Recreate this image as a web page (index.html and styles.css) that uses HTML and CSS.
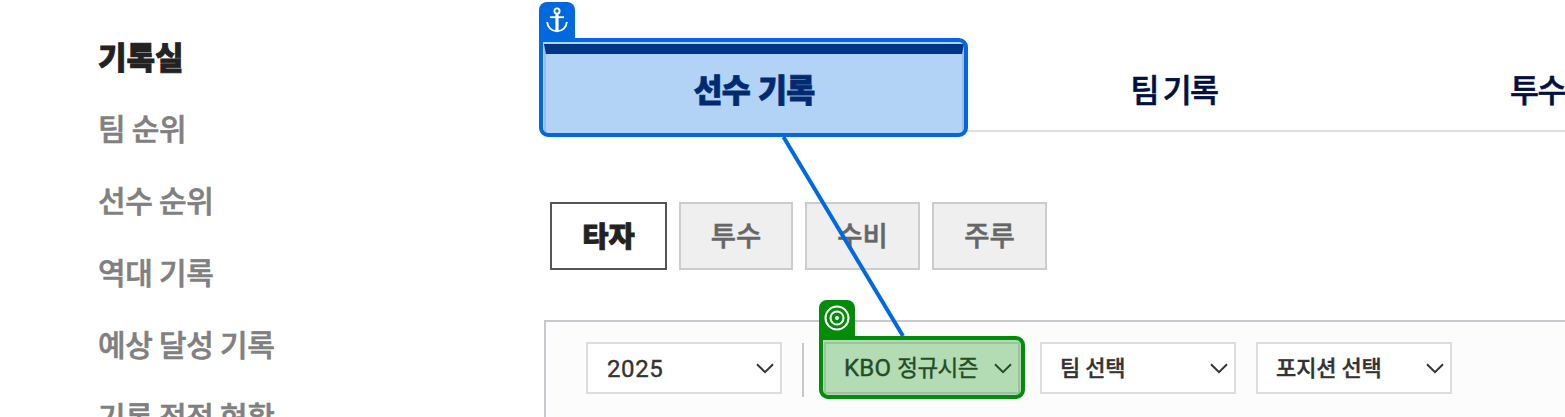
FILE: index.html
```html
<!DOCTYPE html>
<html lang="ko">
<head>
<meta charset="utf-8">
<title>기록실</title>
<link rel="stylesheet" href="styles.css">
</head>
<body>
<div class="page">
  <nav class="side">
    <h1 class="side-title">기록실</h1>
    <a class="side-link">팀 순위</a>
    <a class="side-link">선수 순위</a>
    <a class="side-link">역대 기록</a>
    <a class="side-link">예상 달성 기록</a>
    <a class="side-link">기록 정정 현황</a>
  </nav>
  <main class="main">
    <div class="tabs">
      <a class="tab tab-active"><span>선수 기록</span></a>
      <a class="tab"><span>팀 기록</span></a>
      <a class="tab tab-cut"><span>투수</span></a>
    </div>
    <div class="chips">
      <a class="chip chip-active">타자</a>
      <a class="chip chip-pitcher">투수</a>
      <a class="chip">수비</a>
      <a class="chip">주루</a>
    </div>
    <div class="filters">
      <div class="select year"><span>2025</span><svg class="arrow" viewBox="0 0 18 11"><path d="M1 1.2 9 9.2 17 1.2"/></svg></div>
      <div class="divider"></div>
      <div class="select season"><span><b class="league">KBO</b> 정규시즌</span><svg class="arrow" viewBox="0 0 18 11"><path d="M1 1.2 9 9.2 17 1.2"/></svg></div>
      <div class="select"><span>팀 선택</span><svg class="arrow" viewBox="0 0 18 11"><path d="M1 1.2 9 9.2 17 1.2"/></svg></div>
      <div class="select"><span>포지션 선택</span><svg class="arrow" viewBox="0 0 18 11"><path d="M1 1.2 9 9.2 17 1.2"/></svg></div>
    </div>
  </main>
  <div class="mark mark-anchor"></div>
  <div class="badge badge-anchor">
    <svg width="24" height="26" viewBox="0 0 24 26" fill="none" stroke="#fff" stroke-width="1.9"><circle cx="12" cy="4" r="2.6"/><path d="M5 10.2H19"/><path d="M12 6.500V24" stroke-width="3.2"/><path d="M2.200 15C2.500 20.500 6.500 24.200 12 24.200S21.500 20.500 21.800 15"/></svg>
  </div>
  <div class="mark mark-target"></div>
  <div class="badge badge-target">
    <svg width="26" height="26" viewBox="0 0 26 26" fill="none" stroke="#fff" stroke-width="2"><circle cx="13" cy="13" r="11.500"/><circle cx="13" cy="13" r="6.500"/><circle cx="13" cy="13" r="2" fill="#fff" stroke="none"/></svg>
  </div>
  <svg class="connector" width="1565" height="417" viewBox="0 0 1565 417"><path d="M783.500 137 903 336"/></svg>
</div>
</body>
</html>
```
FILE: styles.css
```css
* { box-sizing: border-box; }
body { margin: 0; background: #fff; font-family: "Noto Sans CJK KR", sans-serif; }
.page { position: relative; display: flex; width: 1565px; height: 417px; overflow: hidden; }
.side { display: flex; flex-direction: column; width: 544px; padding: 19px 0 0 98px; flex: none; }
.side-title { margin: 0; font-size: 31px; font-weight: 900; line-height: 74px; height: 72px; color: #222; -webkit-text-stroke: .8px; }
.side-link { font-size: 30px; font-weight: 500; line-height: 72px; height: 72px; flex: none; color: #808080; white-space: nowrap; word-spacing: -1.5px; letter-spacing: -.35px; -webkit-text-stroke: .6px; }
.main { flex: 1; min-width: 0; padding-top: 44px; overflow: hidden; }
.tabs { display: flex; height: 88px; border-bottom: 2px solid #e0e0e0; }
.tab { display: flex; flex: none; align-items: center; justify-content: center; width: 420px; height: 86px; padding-top: 1px; font-size: 31.5px; font-weight: 500; letter-spacing: -1.6px; word-spacing: -2.5px; color: #00113f; white-space: nowrap; -webkit-text-stroke: .6px; }
.tab-active { height: 88px; padding: 0 0 10px; border: 2px solid #e0e0e0; border-top: 10px solid #001f62; border-bottom: 0; background: #fff; font-weight: 900; letter-spacing: -.7px; word-spacing: 0; -webkit-text-stroke: .8px; }
.tab-cut { justify-content: flex-start; padding-left: 126px; }
.chips { display: flex; gap: 12px; margin: 70px 0 50px 6px; height: 68px; }
.chip { display: flex; align-items: center; justify-content: center; width: 115px; padding-bottom: 4px; border: 2px solid #ccc; background: #efefef; color: #666; font-size: 27.5px; font-weight: 500; -webkit-text-stroke: .5px; }
.chip-active { width: 117px; padding-bottom: 3px; border-color: #555; background: #fff; color: #222; font-size: 28.5px; font-weight: 900; -webkit-text-stroke: .8px; }
.chip-pitcher { width: 114px; }
.filters { display: flex; gap: 20px; height: 110px; padding: 20px 0 0 40px; border: 2px solid #c8c8ce; border-width: 2px 0 0 2px; background: #fcfcfc; }
.select { display: flex; flex: none; align-items: center; justify-content: space-between; width: 196px; height: 52px; padding: 0 6px 0 18px; border: 2px solid #ddd; background: #fff; color: #333; font-size: 22px; font-weight: 500; white-space: nowrap; }
.select span { margin-bottom: 4px; letter-spacing: -.1px; word-spacing: -1px; -webkit-text-stroke: .4px; }
.year span { margin: 1px 0 0 1px; font-family: Roboto, sans-serif; font-size: 24px; font-weight: 400; letter-spacing: .6px; }
.season span { font-family: Roboto, "Noto Sans CJK KR", sans-serif; font-size: 22.5px; font-weight: 400; letter-spacing: -.5px; word-spacing: 1px; }
.league { font-size: 24px; font-weight: 400; letter-spacing: .2px; }
.divider { width: 2px; height: 54px; margin-top: 1px; background: #c8c8ce; }
.arrow { width: 18px; height: 11px; fill: none; stroke: #333; stroke-width: 2; }
.mark { position: absolute; border: 4px solid; border-radius: 9px; }
.mark-anchor { left: 539px; top: 38px; width: 429px; height: 99px; border-color: #0069e0; background: rgba(0, 105, 224, .3); border-top-left-radius: 0; }
.mark-target { left: 819px; top: 336px; width: 206px; height: 63px; border-color: #048b0a; background: rgba(4, 139, 10, .3); border-top-left-radius: 0; }
.badge { position: absolute; display: flex; align-items: center; justify-content: center; width: 36px; height: 36px; border-radius: 8px 8px 0 0; }
.badge-anchor { left: 539px; top: 2px; background: #0069e0; }
.badge-target { left: 819px; top: 300px; background: #048b0a; }
.connector { position: absolute; left: 0; top: 0; fill: none; stroke: #0069e0; stroke-width: 4; }
```
